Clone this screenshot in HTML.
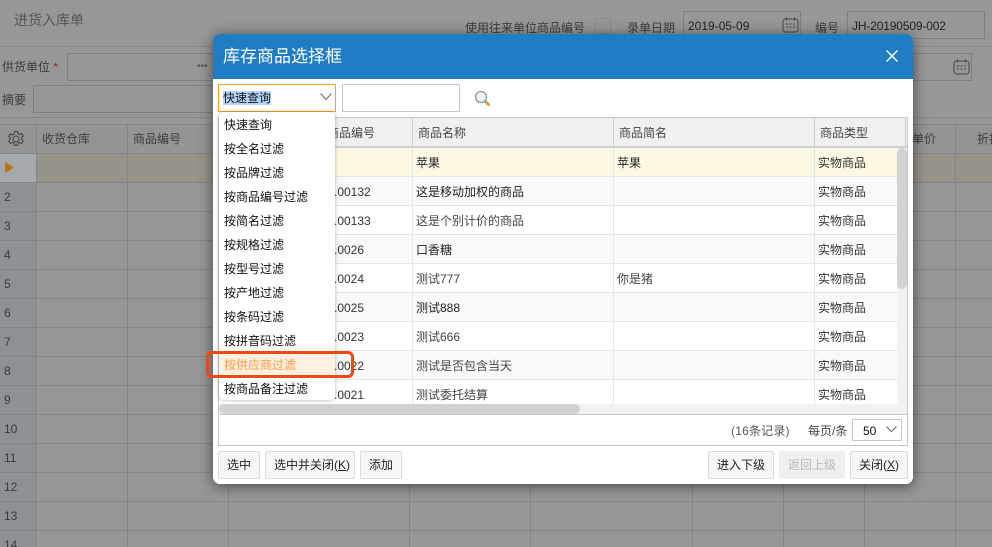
<!DOCTYPE html>
<html><head><meta charset="utf-8"><style>
html,body{margin:0;padding:0;width:992px;height:547px;overflow:hidden}
body{position:relative;background:#979797;font:12px/16px "Liberation Sans","Noto Sans CJK SC",sans-serif;color:#222}
div,span.a{position:absolute;box-sizing:border-box}
.t{white-space:nowrap;line-height:16px}
.bgl{color:#3c3c3c}
.v{width:1px;background:#868686;top:124px;height:423px}
.h{height:1px;left:0;width:992px;background:#868686}
.inp{border:1px solid #808080}
.n{left:4px;color:#3a3a3a;font-size:12px}
.m{left:5px;white-space:nowrap;color:#111;line-height:16px}
.c{white-space:nowrap;color:#333;line-height:16px}
.btn{top:451px;height:28px;background:#f6f6f6;border:1px solid #dcdcdc;border-radius:2px;text-align:center;line-height:26px;color:#222;white-space:nowrap}
u{text-decoration:underline}
</style></head><body>
<div class="t bgl" style="left:14px;top:12px;font-size:14px;color:#555">进货入库单</div>
<div class="t bgl" style="left:465px;top:20px">使用往来单位商品编号</div>
<div class="inp" style="left:595px;top:18px;width:16px;height:16px;border-radius:2px;border-color:#8a8a8a"></div>
<div class="t bgl" style="left:627px;top:20px">录单日期</div>
<div class="inp" style="left:683px;top:11px;width:118px;height:28px"></div>
<div class="t" style="left:688px;top:18px;color:#222">2019-05-09</div>
<svg style="position:absolute;left:782px;top:17px" width="17" height="16" viewBox="0 0 17 16" fill="none" stroke="#444"><rect x="1" y="2" width="15" height="13" rx="2.5"/><path d="M4.500 .5v3M12.500 .5v3M4 7h2M7.500 7h2M11 7h2M4 10h2M7.500 10h2M11 10h2"/></svg>
<div class="t bgl" style="left:815px;top:20px">编号</div>
<div class="inp" style="left:847px;top:11px;width:138px;height:28px"></div>
<div class="t" style="left:852px;top:18px;color:#222;letter-spacing:-.15px">JH-20190509-002</div>
<div class="h" style="top:46px;background:#8a8a8a"></div>
<div class="t bgl" style="left:2px;top:59px">供货单位 <span style="color:#8c2a1a">*</span></div>
<div class="inp" style="left:67px;top:53px;width:160px;height:28px"></div>
<div class="t" style="left:197px;top:59px;color:#555;font-size:10px">•••</div>
<div class="inp" style="left:900px;top:53px;width:72px;height:28px"></div>
<svg style="position:absolute;left:953px;top:59px" width="17" height="16" viewBox="0 0 17 16" fill="none" stroke="#444"><rect x="1" y="2" width="15" height="13" rx="2.5"/><path d="M4.500 .5v3M12.500 .5v3M4 7h2M7.500 7h2M11 7h2M4 10h2M7.500 10h2M11 10h2"/></svg>
<div class="t bgl" style="left:2px;top:92px">摘要</div>
<div class="inp" style="left:33px;top:85px;width:190px;height:28px"></div>
<div class="h" style="top:117px;background:#8a8a8a"></div>

<div style="left:0;top:124px;width:36px;height:423px;background:#8d9194"></div>
<div style="left:0;top:124px;width:992px;height:29px;background:#949494"></div>
<div style="left:36px;top:154px;width:956px;height:28px;background:#96938a"></div>
<div style="left:0;top:154px;width:36px;height:28px;background:#a3a9ac"></div>
<div class="h" style="top:124px"></div><div class="h" style="top:153px"></div><div class="h" style="top:182px"></div><div class="h" style="top:211px"></div><div class="h" style="top:240px"></div><div class="h" style="top:269px"></div><div class="h" style="top:298px"></div><div class="h" style="top:327px"></div><div class="h" style="top:356px"></div><div class="h" style="top:385px"></div><div class="h" style="top:414px"></div><div class="h" style="top:443px"></div><div class="h" style="top:472px"></div><div class="h" style="top:501px"></div><div class="h" style="top:530px"></div>
<div class="v" style="left:36px"></div><div class="v" style="left:127px"></div><div class="v" style="left:228px"></div><div class="v" style="left:409px"></div><div class="v" style="left:530px"></div><div class="v" style="left:692px"></div><div class="v" style="left:783px"></div><div class="v" style="left:864px"></div><div class="v" style="left:955px"></div>
<svg style="position:absolute;left:7px;top:130px" width="18" height="18" viewBox="0 0 18 18" fill="none" stroke="#3c3c3c"><circle cx="9" cy="9" r="3"/><path d="M7.500 1.500h3l.5 2.200 1.700.8 2-1.100 1.600 2.600-1.600 1.500v1.900l1.600 1.500-1.600 2.600-2-1.100-1.700.8-.5 2.200h-3l-.5-2.200-1.700-.8-2 1.100-1.600-2.600 1.600-1.500V8l-1.600-1.500 1.600-2.600 2 1.100 1.700-.8z"/></svg>
<div class="t bgl" style="left:42px;top:131px">收货仓库</div>
<div class="t bgl" style="left:133px;top:131px">商品编号</div>
<div class="t bgl" style="left:912px;top:131px">单价</div>
<div class="t bgl" style="left:977px;top:131px">折扣</div>
<svg style="position:absolute;left:5px;top:162px" width="10" height="11"><path d="M0 0L9 5.500L0 11z" fill="#c0701c"/></svg>
<div class="t n" style="top:189px">2</div><div class="t n" style="top:218px">3</div><div class="t n" style="top:247px">4</div><div class="t n" style="top:276px">5</div><div class="t n" style="top:305px">6</div><div class="t n" style="top:334px">7</div><div class="t n" style="top:363px">8</div><div class="t n" style="top:392px">9</div><div class="t n" style="top:421px">10</div><div class="t n" style="top:450px">11</div><div class="t n" style="top:479px">12</div><div class="t n" style="top:508px">13</div><div class="t n" style="top:537px">14</div>

<!-- dialog -->
<div style="left:213px;top:34px;width:700px;height:450px;background:#fff;border-radius:7px;box-shadow:0 2px 14px rgba(0,0,0,.55)"></div>
<div style="left:213px;top:34px;width:700px;height:45px;background:#1f7dc3;border-radius:7px 7px 0 0"></div>
<div class="t" style="left:223px;top:47px;font-size:17px;line-height:20px;color:#fff">库存商品选择框</div>
<svg style="position:absolute;left:885px;top:49px" width="14" height="14" stroke="#fff" stroke-width="1.500"><path d="M1.500 1.500L12.500 12.500M12.500 1.500L1.500 12.500"/></svg>

<div style="left:218px;top:84px;width:118px;height:28px;border:1px solid #f5a623;background:#fff"></div>
<div style="left:223px;top:91px;width:48px;height:14px;background:#b4d5fe"></div>
<div class="t" style="left:223px;top:90px;color:#111">快速查询</div>
<svg style="position:absolute;left:320px;top:93px" width="12" height="8" fill="none" stroke="#666"><path d="M.5 .5L6 6.500L11.500 .5"/></svg>
<div style="left:342px;top:84px;width:118px;height:28px;border:1px solid #c8c8c8;background:#fff"></div>
<svg style="position:absolute;left:474px;top:90px" width="17" height="17" fill="none"><path d="M10.500 10.500L14.500 14.500" stroke="#c9a24a" stroke-width="3" stroke-linecap="round"/><circle cx="7" cy="7" r="5.500" fill="#eef3f7" stroke="#8d979f" stroke-width="1.300"/></svg>

<!-- grid -->
<div style="left:218px;top:117px;width:690px;height:329px;border:1px solid #c8c8c8;background:#fff"></div>
<div style="left:219px;top:118px;width:688px;height:30px;background:#f0f0f0;border-bottom:2px solid #d0d0d0"></div>
<div style="left:219px;top:148px;width:678px;height:29px;background:#fdf8e4;border-bottom:1px solid #e6e6e6"></div>
<div style="left:219px;top:177px;width:678px;height:29px;background:#f9f9f9;border-bottom:1px solid #e6e6e6"></div>
<div style="left:219px;top:206px;width:678px;height:29px;background:#fff;border-bottom:1px solid #e6e6e6"></div>
<div style="left:219px;top:235px;width:678px;height:29px;background:#f9f9f9;border-bottom:1px solid #e6e6e6"></div>
<div style="left:219px;top:264px;width:678px;height:29px;background:#fff;border-bottom:1px solid #e6e6e6"></div>
<div style="left:219px;top:293px;width:678px;height:29px;background:#f9f9f9;border-bottom:1px solid #e6e6e6"></div>
<div style="left:219px;top:322px;width:678px;height:29px;background:#fff;border-bottom:1px solid #e6e6e6"></div>
<div style="left:219px;top:351px;width:678px;height:29px;background:#f9f9f9;border-bottom:1px solid #e6e6e6"></div>
<div style="left:219px;top:380px;width:678px;height:24px;background:#fff"></div>
<div style="left:412px;top:118px;width:1px;height:30px;background:#cfcfcf"></div>
<div style="left:613px;top:118px;width:1px;height:30px;background:#cfcfcf"></div>
<div style="left:814px;top:118px;width:1px;height:30px;background:#cfcfcf"></div>
<div style="left:905px;top:118px;width:1px;height:30px;background:#cfcfcf"></div>
<div style="left:412px;top:148px;width:1px;height:256px;background:#e6e6e6"></div>
<div style="left:613px;top:148px;width:1px;height:256px;background:#e6e6e6"></div>
<div style="left:814px;top:148px;width:1px;height:256px;background:#e6e6e6"></div>

<div class="c" style="left:327px;top:125px;color:#444">商品编号</div>
<div class="c" style="left:418px;top:125px;color:#444">商品名称</div>
<div class="c" style="left:619px;top:125px;color:#444">商品简名</div>
<div class="c" style="left:820px;top:125px;color:#444">商品类型</div>

<div class="c" style="left:416px;top:155px;color:#222">苹果</div><div class="c" style="left:617px;top:155px;color:#222">苹果</div><div class="c" style="left:818px;top:155px">实物商品</div>
<div class="c" style="left:334px;top:184px">.00132</div><div class="c" style="left:416px;top:184px;color:#222">这是移动加权的商品</div><div class="c" style="left:818px;top:184px">实物商品</div>
<div class="c" style="left:334px;top:213px">.00133</div><div class="c" style="left:416px;top:213px;color:#444">这是个别计价的商品</div><div class="c" style="left:818px;top:213px">实物商品</div>
<div class="c" style="left:334px;top:242px">.0026</div><div class="c" style="left:416px;top:242px;color:#222">口香糖</div><div class="c" style="left:818px;top:242px">实物商品</div>
<div class="c" style="left:334px;top:271px">.0024</div><div class="c" style="left:416px;top:271px;color:#444">测试777</div><div class="c" style="left:617px;top:271px;color:#444">你是猪</div><div class="c" style="left:818px;top:271px">实物商品</div>
<div class="c" style="left:334px;top:300px">.0025</div><div class="c" style="left:416px;top:300px;color:#222">测试888</div><div class="c" style="left:818px;top:300px">实物商品</div>
<div class="c" style="left:334px;top:329px">.0023</div><div class="c" style="left:416px;top:329px;color:#444">测试666</div><div class="c" style="left:818px;top:329px">实物商品</div>
<div class="c" style="left:334px;top:358px">.0022</div><div class="c" style="left:416px;top:358px;color:#444">测试是否包含当天</div><div class="c" style="left:818px;top:358px">实物商品</div>
<div class="c" style="left:334px;top:387px">.0021</div><div class="c" style="left:416px;top:387px;color:#444">测试委托结算</div><div class="c" style="left:818px;top:387px">实物商品</div>

<div style="left:897px;top:148px;width:10px;height:256px;background:#f2f2f2"></div>
<div style="left:897px;top:148px;width:10px;height:141px;background:#d2d2d2;border-radius:5px"></div>
<div style="left:219px;top:404px;width:688px;height:10px;background:#f2f2f2"></div>
<div style="left:219px;top:404px;width:361px;height:10px;background:#d2d2d2;border-radius:5px"></div>
<div style="left:219px;top:414px;width:688px;height:1px;background:#c8c8c8"></div>

<div class="c" style="left:731px;top:423px;color:#555;letter-spacing:.2px">(16条记录)</div>
<div class="c" style="left:808px;top:423px;color:#444">每页/条</div>
<div style="left:852px;top:419px;width:50px;height:22px;border:1px solid #c8c8c8;background:#fff"></div>
<div class="c" style="left:863px;top:423px;color:#111">50</div>
<svg style="position:absolute;left:886px;top:426px" width="11" height="7" fill="none" stroke="#666"><path d="M.5 .5L5.500 5.500L10.500 .5"/></svg>

<div class="btn" style="left:218px;width:42px">选中</div>
<div class="btn" style="left:265px;width:90px;text-indent:4px">选中并关闭(<u>K</u>)</div>
<div class="btn" style="left:360px;width:42px">添加</div>
<div class="btn" style="left:708px;width:66px">进入下级</div>
<div class="btn" style="left:779px;width:66px;background:#efefef;border-color:#efefef;color:#bbb">返回上级</div>
<div class="btn" style="left:850px;width:58px">关闭(<u>X</u>)</div>

<!-- dropdown -->
<div style="left:219px;top:112px;width:116px;height:288px;background:#fff;border-radius:5px;box-shadow:0 0 4px rgba(0,0,0,.3)">
<div style="left:0;top:240px;width:116px;height:24px;background:#fff1e2"></div>
<div class="m" style="top:5px">快速查询</div>
<div class="m" style="top:29px">按全名过滤</div>
<div class="m" style="top:53px">按品牌过滤</div>
<div class="m" style="top:77px">按商品编号过滤</div>
<div class="m" style="top:101px">按简名过滤</div>
<div class="m" style="top:125px">按规格过滤</div>
<div class="m" style="top:149px">按型号过滤</div>
<div class="m" style="top:173px">按产地过滤</div>
<div class="m" style="top:197px">按条码过滤</div>
<div class="m" style="top:221px">按拼音码过滤</div>
<div class="m" style="top:245px;color:#ff9a3c">按供应商过滤</div>
<div class="m" style="top:269px">按商品备注过滤</div>
</div>
<div style="left:206px;top:351px;width:148px;height:27px;border:3px solid #f0490f;border-radius:6px"></div>
</body></html>
